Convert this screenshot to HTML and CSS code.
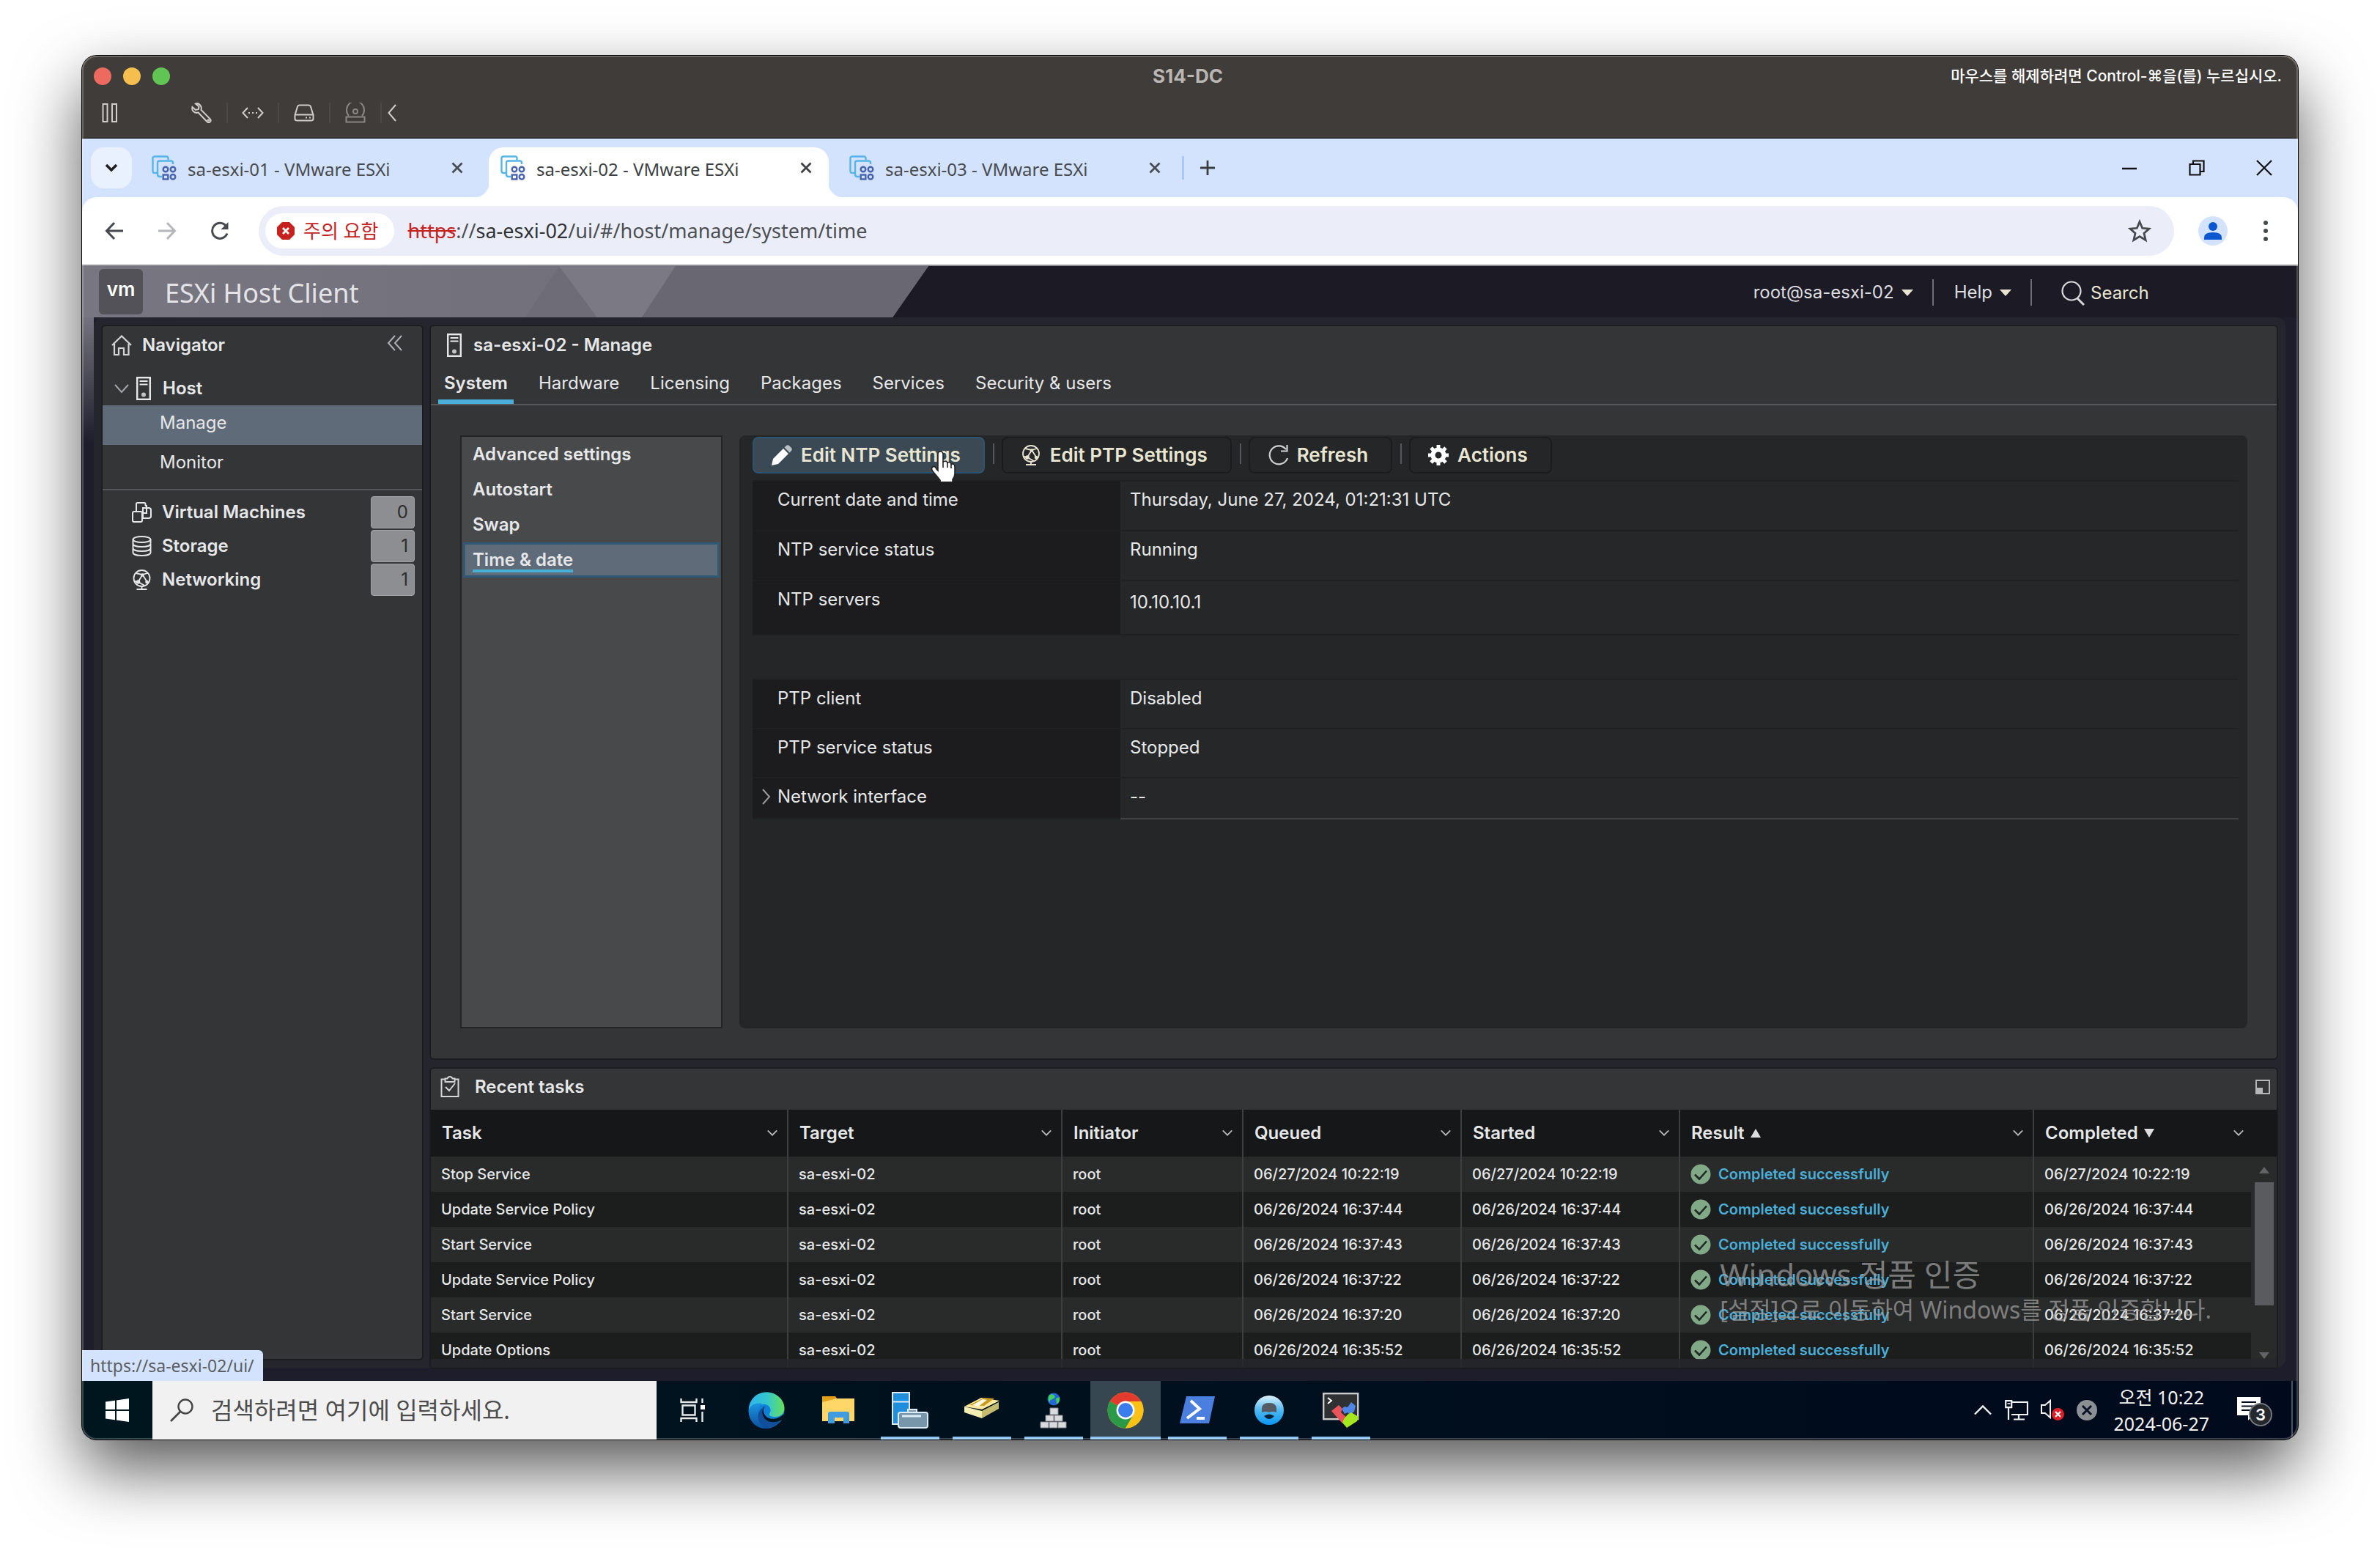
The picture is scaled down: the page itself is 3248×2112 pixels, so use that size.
FILE: index.html
```html
<!DOCTYPE html>
<html lang="ko">
<head>
<meta charset="utf-8">
<meta name="viewport" content="width=device-width, initial-scale=1">
<title>S14-DC</title>
<link rel="stylesheet" href="styles.css">
</head>
<body>
<svg class="sprite" aria-hidden="true">
  <symbol id="i-esxi" viewBox="0 0 34 34"><g fill="none" stroke="#56b4e6" stroke-width="2.4"><path d="M7 24H4Q1.500 24 1.500 21V4Q1.500 1.500 4 1.500H20Q22.500 1.500 22.500 4V6"/><path d="M14 29H11Q8 29 8 26V10Q8 7.500 11 7.500H26Q29 7.500 29 10V12"/></g><g fill="none" stroke="#4763ad" stroke-width="2.400"><circle cx="19" cy="19" r="3.300"/><circle cx="29" cy="19" r="3.300"/><rect x="15.700" y="26.500" width="6.600" height="6"/><circle cx="29" cy="29.300" r="3.300"/></g></symbol>
  <symbol id="i-x" viewBox="0 0 16 16"><path d="M1.500 1.500l13 13M14.500 1.500l-13 13" fill="none" stroke="currentColor" stroke-width="2.800"/></symbol>
  <symbol id="i-down" viewBox="0 0 18 12"><path d="M2 2l7 7 7-7" fill="none" stroke="currentColor" stroke-width="2"/></symbol>
  <symbol id="i-host" viewBox="0 0 20 32"><rect x="1.200" y="1.200" width="17.600" height="29.600" fill="none" stroke="currentColor" stroke-width="2.400"/><path d="M4.500 6h11M4.500 10.500h11" stroke="currentColor" stroke-width="2.200"/><circle cx="10" cy="24.500" r="3" fill="currentColor" opacity=".8"/></symbol>
  <symbol id="i-globe" viewBox="0 0 26 28"><g fill="none" stroke="currentColor" stroke-width="1.800"><circle cx="13" cy="12" r="11"/><path d="M6 27h14M13 23v4M5 5l9 2 7 11M21 5l-7 2-6 10-5-1M8 17l9 5"/></g><circle cx="14" cy="7.500" r="2.300" fill="currentColor"/><circle cx="8" cy="17" r="2.800" fill="currentColor"/><circle cx="20" cy="17" r="2.300" fill="currentColor"/></symbol>
  <symbol id="i-ok" viewBox="0 0 28 28"><circle cx="14" cy="14" r="13.500" fill="#82a987"/><path d="M6 14.500l6 6 10-11" fill="none" stroke="#1f2a22" stroke-width="2.600"/></symbol>
  <symbol id="i-lens" viewBox="0 0 32 32"><circle cx="21" cy="11" r="9.500" fill="none" stroke="currentColor" stroke-width="2.400"/><path d="M14 18L1 31" stroke="currentColor" stroke-width="2.600"/></symbol>
</svg>

<main class="window">
  <header class="titlebar">
    <div class="title-row">
      <div class="lights"><button class="light red" aria-label="닫기"></button><button class="light yellow" aria-label="최소화"></button><button class="light green" aria-label="확대"></button></div>
      <h1 class="vm-name">S14-DC</h1>
      <p class="hint">마우스를 해제하려면 Control-⌘을(를) 누르십시오.</p>
    </div>
    <div class="vm-tools">
      <button class="vm-tool pause" aria-label="일시 정지"><svg width="22" height="26" viewBox="0 0 22 26"><path d="M1.500 1h6v24h-6zM14 1h6v24h-6z"/></svg></button>
      <button class="vm-tool split" aria-label="설정"><svg width="28" height="28" viewBox="0 0 28 28"><path d="M6 1.500C10 0 15 4 13.500 10L26 22.500Q27.500 25 25.500 26.500T21.500 26L9.500 13.500C5 15 0 11 1.500 6L6 10l4-1 .5-3.500z"/><circle cx="23.500" cy="24" r=".8"/></svg></button>
      <button class="vm-tool split" aria-label="네트워크"><svg width="30" height="16" viewBox="0 0 30 16"><path d="M8 1L1.500 8 8 15M22 1l6.500 7L22 15M9 8h2M14 8h2M19 8h2"/></svg></button>
      <button class="vm-tool split" aria-label="디스크"><svg width="28" height="24" viewBox="0 0 28 24"><path d="M1.500 15L5 3.500Q5.600 1.500 8 1.500h12q2.400 0 3 2L26.500 15v5q0 2.500-3 2.500h-19q-3 0-3-2.500zM1.500 14.500h25M16 18.500h2M21 18.500h2"/></svg></button>
      <button class="vm-tool split dim" aria-label="CD/DVD"><svg width="28" height="28" viewBox="0 0 28 28"><path d="M5 18A12 12 0 1 1 23 18M1.500 19.500h25v7h-25z"/><circle cx="14" cy="12" r="3"/></svg></button>
      <button class="vm-tool narrow" aria-label="접기"><svg width="12" height="24" viewBox="0 0 12 24"><path d="M11 1L1.500 12 11 23"/></svg></button>
    </div>
  </header>

  <section class="browser">
    <div class="tabstrip">
      <button class="tab-search" aria-label="탭 검색"><svg width="18" height="12"><path d="M2 2l7 7 7-7" fill="none" stroke="#1f1f1f" stroke-width="3.600"/></svg></button>
      <div class="tabs">
        <div class="tab"><svg class="favicon"><use href="#i-esxi"/></svg><a href="#t1">sa-esxi-01 - VMware ESXi</a><button aria-label="탭 닫기"><svg width="16" height="16"><use href="#i-x"/></svg></button></div>
        <div class="tab active"><svg class="favicon"><use href="#i-esxi"/></svg><a href="#t2">sa-esxi-02 - VMware ESXi</a><button aria-label="탭 닫기"><svg width="16" height="16"><use href="#i-x"/></svg></button></div>
        <div class="tab"><svg class="favicon"><use href="#i-esxi"/></svg><a href="#t3">sa-esxi-03 - VMware ESXi</a><button aria-label="탭 닫기"><svg width="16" height="16"><use href="#i-x"/></svg></button></div>
      </div>
      <button class="new-tab" aria-label="새 탭"><svg width="22" height="22"><path d="M11 1v20M1 11h20" stroke="#3c4043" stroke-width="2.800"/></svg></button>
      <div class="win-controls">
        <button aria-label="최소화"><svg width="22" height="22"><path d="M1 12h20" stroke="#111" stroke-width="2.400"/></svg></button>
        <button aria-label="이전 크기로"><svg width="22" height="22" fill="none" stroke="#111" stroke-width="2.200"><path d="M1.500 6h14v14.500h-14zM6 6V1.500h14.500V16H16"/></svg></button>
        <button aria-label="닫기"><svg width="22" height="22"><path d="M1 1l20 20M21 1L1 21" stroke="#111" stroke-width="2.200"/></svg></button>
      </div>
    </div>
    <div class="toolbar">
      <button class="nav-btn" aria-label="뒤로"><svg width="26" height="26"><path d="M25 13H3M13 2L2.500 13 13 24" fill="none" stroke="#46494d" stroke-width="3"/></svg></button>
      <button class="nav-btn" aria-label="앞으로"><svg width="26" height="26"><path d="M1 13h22M13 2l10.500 11L13 24" fill="none" stroke="#b4b6b9" stroke-width="3"/></svg></button>
      <button class="nav-btn" aria-label="새로고침"><svg width="26" height="26"><path d="M23 16.500A10.500 10.500 0 1 1 21.500 6.500" fill="none" stroke="#46494d" stroke-width="3"/><path d="M24.500 1v10h-10z" fill="#46494d"/></svg></button>
      <div class="omnibox">
        <button class="chip"><svg width="24" height="24"><path d="M7 0h10l7 7v10l-7 7H7l-7-7V7z" fill="#c5221f"/><path d="M8 8l8 8M16 8l-8 8" stroke="#fff" stroke-width="2.800"/></svg><span>주의 요함</span></button>
        <div class="url" role="textbox" contenteditable="true" spellcheck="false" aria-label="주소"><s>https</s>://<span class="domain">sa-esxi-02</span>/ui/#/host/manage/system/time</div>
        <button class="star" aria-label="북마크"><svg width="32" height="32" viewBox="0 0 32 32"><path d="M16 3.500l3.700 8.800 9.300.8-7 6.200 2.100 9.200L16 23.600l-8.100 4.900L10 19.300l-7-6.200 9.300-.8z" fill="none" stroke="#46494d" stroke-width="2.800"/></svg></button>
      </div>
      <button class="profile" aria-label="프로필"><svg width="40" height="40"><circle cx="20" cy="20" r="20" fill="#d3e3fd"/><circle cx="20" cy="14" r="6" fill="#0b57d0"/><path d="M8 32v-3q0-7 12-7t12 7v3z" fill="#0b57d0"/></svg></button>
      <button class="more" aria-label="메뉴"><svg width="8" height="32" fill="#46494d"><circle cx="4" cy="5" r="3"/><circle cx="4" cy="16" r="3"/><circle cx="4" cy="27" r="3"/></svg></button>
    </div>

    <div class="app">
      <header class="app-header">
        <svg class="facets" width="1160" height="70" viewBox="0 0 1160 70" aria-hidden="true"><defs><linearGradient id="hg"><stop offset="0" stop-color="#787781"/><stop offset="1" stop-color="#6e6d77"/></linearGradient></defs><path d="M0 0H1155L1106 70H0z" fill="url(#hg)"/><path d="M651 0L605 70H703z" fill="#6e6d77"/><path d="M651 0H810L764 70H703z" fill="#7b7a84"/><path d="M810 0H1155L1106 70H764z" fill="#696872"/></svg>
        <span class="vm-logo">vm</span>
        <h2 class="product">ESXi Host Client</h2>
        <nav class="app-links">
          <button>root@sa-esxi-02<svg width="16" height="9"><path d="M0 0h16L8 9z" fill="#e8e6d2"/></svg></button>
          <button>Help<svg width="16" height="9"><path d="M0 0h16L8 9z" fill="#e8e6d2"/></svg></button>
        </nav>
        <label class="app-search"><svg width="32" height="34" viewBox="0 0 32 34" fill="none" stroke="#d8d8dc" stroke-width="2.200"><circle cx="14" cy="14" r="12.500"/><path d="M22 24l9 9" stroke-width="3"/></svg><input type="text" placeholder="Search" aria-label="Search"></label>
      </header>

      <div class="frame">
        <aside class="panel navigator">
          <div class="nav-head"><svg width="28" height="28" viewBox="0 0 28 28" fill="none" stroke="#d4d5d7" stroke-width="2.200"><path d="M1 14L14 1.500 27 14M4 12v15h6v-9h7v9h6.500V12"/></svg><h3>Navigator</h3><button aria-label="Collapse"><svg width="22" height="22" fill="none" stroke="#aeb0b3" stroke-width="2"><path d="M11 1L2 11l9 10M20 1l-9 10 9 10"/></svg></button></div>
          <a class="host" href="#host"><svg width="20" height="14" fill="none" stroke="#a3a5a8" stroke-width="2"><path d="M1 2l9 10 9-10"/></svg><svg width="20" height="32"><use href="#i-host"/></svg>Host</a>
          <ul class="host-sub"><li><a class="on" href="#manage">Manage</a></li><li><a href="#monitor">Monitor</a></li></ul>
          <ul class="inventory">
            <li><a href="#vms"><svg width="27" height="28" viewBox="0 0 27 28" fill="none" stroke="currentColor" stroke-width="2"><path d="M6 9V2.500Q6 1 7.500 1H17q1.500 0 1.500 1.500V5M14 8h9q3 0 3 3v8q0 3-3 3h-8V8zM6 9v4M18 5h2v10h-7"/><path d="M3 13h9q2 0 2 2v10q0 2-2 2H3q-2 0-2-2V15q0-2 2-2z"/></svg>Virtual Machines</a><span class="badge">0</span></li>
            <li><a href="#storage"><svg width="27" height="28" viewBox="0 0 27 28" fill="none" stroke="currentColor" stroke-width="2"><ellipse cx="13.500" cy="5" rx="12" ry="4"/><path d="M1.500 5v18c0 5.300 24 5.300 24 0V5M1.500 11c0 5.300 24 5.300 24 0M1.500 17c0 5.300 24 5.300 24 0"/></svg>Storage</a><span class="badge">1</span></li>
            <li><a href="#net"><svg width="27" height="28"><use href="#i-globe"/></svg>Networking</a><span class="badge">1</span></li>
          </ul>
        </aside>

        <div class="content">
          <section class="panel manage">
            <div class="panel-title"><svg width="20" height="32"><use href="#i-host"/></svg><h3>sa-esxi-02 - Manage</h3></div>
            <nav class="page-tabs"><a class="on" href="#system">System</a><a href="#hardware">Hardware</a><a href="#licensing">Licensing</a><a href="#packages">Packages</a><a href="#services">Services</a><a href="#security">Security &amp; users</a></nav>
            <div class="manage-body">
              <ul class="settings-menu"><li><a href="#adv">Advanced settings</a></li><li><a href="#auto">Autostart</a></li><li><a href="#swap">Swap</a></li><li class="on"><a href="#time">Time &amp; date</a></li></ul>
              <div class="details">
                <div class="actions">
                  <button class="hover"><svg width="28" height="28"><path d="M0 28l2-9L16 5l7 7L9 26z" fill="#fff"/><path d="M17.500 3.500L20 1q2-1.500 4 0l3 3q1.500 2 0 4l-2.500 2.500z" fill="#b9bec2"/></svg>Edit NTP Settings<svg class="cursor" width="34" height="46" viewBox="0 0 34 46"><path d="M10 27V5q0-4 3.500-4T17 5v10q4-2 6 1 4-1.500 5 2 5-1 5 4v9q0 5-3 8v6H13v-5L3 28q-3-4 0-6t5 3z" fill="#fff" stroke="#222" stroke-width="1.600"/><path d="M17 15v8M23 16v7M28 18v6" stroke="#222" stroke-width="1.600"/></svg></button>
                  <button><svg width="28" height="28"><use href="#i-globe"/></svg>Edit PTP Settings</button>
                  <button><svg width="28" height="30" fill="none" stroke="#cfd0d0" stroke-width="2.200"><path d="M27 19A12.500 12.500 0 1 1 25 7M26.500 1v8.500H18"/></svg>Refresh</button>
                  <button><svg width="28" height="28" viewBox="0 0 28 28"><circle cx="14" cy="14" r="7.500" fill="none" stroke="#fff" stroke-width="6"/><path d="M14 0v6M14 22v6M0 14h6M22 14h6M4 4l4.500 4.500M19.500 19.500L24 24M24 4l-4.500 4.500M8.500 19.500L4 24" stroke="#fff" stroke-width="5"/></svg>Actions</button>
                </div>
                <table class="props"><tbody>
                  <tr><th scope="row">Current date and time</th><td>Thursday, June 27, 2024, 01:21:31 UTC</td></tr>
                  <tr><th scope="row">NTP service status</th><td>Running</td></tr>
                  <tr class="tall"><th scope="row">NTP servers</th><td><div class="server-list">10.10.10.1</div></td></tr>
                </tbody></table>
                <table class="props last"><tbody>
                  <tr><th scope="row">PTP client</th><td>Disabled</td></tr>
                  <tr><th scope="row">PTP service status</th><td>Stopped</td></tr>
                  <tr class="short"><th scope="row"><svg class="twist" width="12" height="22" fill="none" stroke="#9a9b9d" stroke-width="2"><path d="M1 1l9 10-9 10"/></svg>Network interface</th><td>--</td></tr>
                </tbody></table>
              </div>
            </div>
          </section>

          <section class="panel tasks">
            <div class="tasks-head"><svg width="26" height="30" viewBox="0 0 26 30" fill="none" stroke="#d4d5d7" stroke-width="2"><path d="M6 4.500H1.500V28h23V4.500H20M6.500 3.500h3q1-2.500 3.500-2.500t3.500 2.500h3V8h-13zM7 15l5 5 8-10"/></svg><h3>Recent tasks</h3><button aria-label="Minimize"><svg width="20" height="20"><rect x="1" y="1" width="18" height="18" fill="none" stroke="#b5b6b8" stroke-width="2"/><path d="M2 11h8v7H2z" fill="#b5b6b8"/></svg></button></div>
            <div class="grid">
              <table class="task-table">
                <colgroup><col class="c-task"><col class="c-target"><col class="c-init"><col class="c-date"><col class="c-date"><col class="c-result"><col></colgroup>
                <thead><tr>
                  <th><div>Task<svg class="menu"><use href="#i-down"/></svg></div></th>
                  <th><div>Target<svg class="menu"><use href="#i-down"/></svg></div></th>
                  <th><div>Initiator<svg class="menu"><use href="#i-down"/></svg></div></th>
                  <th><div>Queued<svg class="menu"><use href="#i-down"/></svg></div></th>
                  <th><div>Started<svg class="menu"><use href="#i-down"/></svg></div></th>
                  <th><div>Result<svg class="sort" width="14" height="12"><path d="M7 0l7 12H0z" fill="#ddd"/></svg><svg class="menu"><use href="#i-down"/></svg></div></th>
                  <th><div>Completed<svg class="sort" width="14" height="12"><path d="M0 0h14L7 12z" fill="#ddd"/></svg><svg class="menu"><use href="#i-down"/></svg></div></th>
                </tr></thead>
                <tbody>
                  <tr><td>Stop Service</td><td>sa-esxi-02</td><td>root</td><td>06/27/2024 10:22:19</td><td>06/27/2024 10:22:19</td><td><span class="ok"><svg><use href="#i-ok"/></svg>Completed successfully</span></td><td>06/27/2024 10:22:19</td></tr>
                  <tr><td>Update Service Policy</td><td>sa-esxi-02</td><td>root</td><td>06/26/2024 16:37:44</td><td>06/26/2024 16:37:44</td><td><span class="ok"><svg><use href="#i-ok"/></svg>Completed successfully</span></td><td>06/26/2024 16:37:44</td></tr>
                  <tr><td>Start Service</td><td>sa-esxi-02</td><td>root</td><td>06/26/2024 16:37:43</td><td>06/26/2024 16:37:43</td><td><span class="ok"><svg><use href="#i-ok"/></svg>Completed successfully</span></td><td>06/26/2024 16:37:43</td></tr>
                  <tr><td>Update Service Policy</td><td>sa-esxi-02</td><td>root</td><td>06/26/2024 16:37:22</td><td>06/26/2024 16:37:22</td><td><span class="ok"><svg><use href="#i-ok"/></svg>Completed successfully</span></td><td>06/26/2024 16:37:22</td></tr>
                  <tr><td>Start Service</td><td>sa-esxi-02</td><td>root</td><td>06/26/2024 16:37:20</td><td>06/26/2024 16:37:20</td><td><span class="ok"><svg><use href="#i-ok"/></svg>Completed successfully</span></td><td>06/26/2024 16:37:20</td></tr>
                  <tr><td>Update Options</td><td>sa-esxi-02</td><td>root</td><td>06/26/2024 16:35:52</td><td>06/26/2024 16:35:52</td><td><span class="ok"><svg><use href="#i-ok"/></svg>Completed successfully</span></td><td>06/26/2024 16:35:52</td></tr>
                </tbody>
              </table>
              <div class="scrollbar" aria-hidden="true"><svg width="14" height="9"><path d="M7 0l7 9H0z" fill="#626365"/></svg><span class="thumb"></span><svg width="14" height="9"><path d="M0 0h14L7 9z" fill="#626365"/></svg></div>
            </div>
          </section>
        </div>
      </div>
      <div class="link-status">https://sa-esxi-02/ui/</div>
      <div class="watermark"><p class="wm-title">Windows 정품 인증</p><p class="wm-text">[설정]으로 이동하여 Windows를 정품 인증합니다.</p></div>
    </div>
  </section>

  <footer class="taskbar">
    <button class="start" aria-label="시작"><svg width="32" height="32"><path d="M0 4.500l13-1.800V15H0zM15 2.400L32 0v15H15zM0 17h13v12.300L0 27.500zM15 17h17v15l-17-2.400z" fill="#fff"/></svg></button>
    <label class="search"><svg width="32" height="32"><use href="#i-lens"/></svg><input type="text" placeholder="검색하려면 여기에 입력하세요." aria-label="검색"></label>
    <nav class="apps">
      <button aria-label="작업 보기"><svg width="34" height="32" fill="none" stroke="#e6e8e9" stroke-width="2.400"><path d="M1.500 0v5h21V0M1.500 32v-5h21v5M3.500 9.500h17v13h-17zM30.500 0v6M30.500 18v14"/><path d="M28 9h6v6h-6z" fill="#fff" stroke="none"/></svg></button>
      <button aria-label="Edge"><svg width="50" height="50" viewBox="0 0 50 50"><defs><linearGradient id="e1"><stop offset="0" stop-color="#2fb5ea"/><stop offset=".5" stop-color="#33c6cf"/><stop offset="1" stop-color="#67e05c"/></linearGradient><linearGradient id="e2" x2="0" y2="1"><stop offset="0" stop-color="#1b96e0"/><stop offset="1" stop-color="#0c4f9e"/></linearGradient></defs><circle cx="25" cy="25" r="24.500" fill="#0f7fd7"/><path d="M1 22C3 8 13 .5 25 .5 39 .5 49.500 11 49.500 22c0 8-6 12-12 12-7 0-10-2-8-5 3-5 0-12-8-12C12 17 4 21 1 28z" fill="url(#e1)"/><path d="M1 24c3-7 11-9.500 18-8-5 4-7 10-5 18s9 14 17 15C14 54-1 40 1 24z" fill="url(#e2)"/><path d="M22 20c-4 5-4 12 1 17s14 5 22 1C38 50 25 52 18 45s-6-20 4-25z" fill="#114f9c"/><path d="M23 19c-3 4-3 11 2 15s15 5 25-5v10l-4-1c-9 5-18 4-23-1s-5-13 0-18z" fill="#00151f"/></svg></button>
      <button aria-label="파일 탐색기"><svg width="44" height="38" viewBox="0 0 44 38"><path d="M0 0h18l3 4v6H0z" fill="#e3a21a"/><path d="M0 8l20-5h24v31H0z" fill="#ffd667"/><path d="M8 37V24q0-3 3-3h23q3 0 3 3v13h-8v-8H17v8z" fill="#3f9ce0"/></svg></button>
      <button class="open" aria-label="서버 관리자"><svg width="50" height="50" viewBox="0 0 50 50" stroke="#dcebf5" stroke-width="2"><path d="M1 1h23v43H1z" fill="#1f8fdd"/><path d="M1 13.500h23"/><path d="M22 28v-4h12v4" fill="#7b99ad"/><rect x="9" y="28" width="40" height="21" rx="3" fill="#7796aa"/><path d="M14 33h26" stroke-width="3"/></svg></button>
      <button class="open" aria-label="DNS"><svg width="50" height="50" viewBox="0 0 50 50"><path d="M1 20L24 8l25 4-24 12z" fill="#fbe9a0"/><path d="M8 18L28 8l14 1-14 10z" fill="#c99a1c"/><path d="M12 18L26 10l6 1-12 9z" fill="#fffbe2"/><path d="M1 20l24 6v10L1 28z" fill="#f3edb4"/><path d="M25 26l23-12v9L25 36z" fill="#c3bb6e"/></svg></button>
      <button class="open" aria-label="네트워크"><svg width="38" height="50" viewBox="0 0 38 50"><circle cx="19" cy="10" r="8.500" fill="#2566d8"/><path d="M13 4q5-2 7 1t-3 5-3 5q-4-4-1-11zM22 9l5-2q1 7-4 10z" fill="#3fd05a"/><g fill="#d9dadd" stroke="#85878d"><path d="M14 22h11v9H14zM8 32h11v8H8zM20 32h11v8H20zM1 41h11v8H1zM13 41h11v8H13zM25 41h11v8H25z"/></g></svg></button>
      <button class="open active" aria-label="Chrome"><svg width="50" height="50" viewBox="0 0 50 50"><circle cx="25" cy="25" r="24.500" fill="#fbc116"/><path d="M25 25L3.800 12.700A24.500 24.500 0 0 1 46.200 12.700z" fill="#e33b2e"/><path d="M3.800 12.700A24.500 24.500 0 0 0 25 49.500L36 31 25 25z" fill="#2b9a48"/><path d="M25 13h21.400A24.500 24.500 0 0 1 25 49.500L36 31z" fill="#fbc116"/><circle cx="25" cy="25" r="12.500" fill="#fff"/><circle cx="25" cy="25" r="10" fill="#3b7ded"/></svg></button>
      <button class="open" aria-label="PowerShell"><svg width="48" height="38" viewBox="0 0 48 38"><path d="M9 0h39l-8 37H0z" fill="#4a7fe0"/><path d="M15 6l12 11L10 30M23 30h11" fill="none" stroke="#fff" stroke-width="4"/></svg></button>
      <button class="open" aria-label="뷰어"><svg width="40" height="40" viewBox="0 0 40 40"><defs><linearGradient id="d1" x2="0" y2="1"><stop offset="0" stop-color="#dff1fb"/><stop offset=".5" stop-color="#4fb9f2"/><stop offset="1" stop-color="#0a95f2"/></linearGradient></defs><circle cx="20" cy="20" r="20" fill="url(#d1)"/><path d="M10 23v-5q0-8 10-8t10 8v5q-5-2-10 0-5-2-10 0z" fill="#555b62"/><path d="M13 28q7-5 14 0-7 8-14 0z" fill="#052338"/></svg></button>
      <button class="open" aria-label="MobaXterm"><svg width="50" height="48" viewBox="0 0 50 48"><rect x="1.200" y="1.200" width="47" height="35" fill="#2f3031" stroke="#c9cacc" stroke-width="2.400"/><path d="M7 7l5 4-5 4" fill="none" stroke="#fff" stroke-width="2"/><path d="M12 25l10-8 5 5-2 5 8 7-6 8z" fill="#e9535a"/><path d="M26 22l4-3 4 1 5-7 6 5-2 8-6 4-3-3-4 2z" fill="#4e86e8"/><path d="M29 36l5-6 5-3 10 6-2 6-14 9-6-7z" fill="#a6e61f"/></svg></button>
    </nav>
    <div class="tray">
      <button aria-label="숨겨진 아이콘"><svg width="26" height="14"><path d="M2 12.500l11-11 11 11" fill="none" stroke="#f2f2f2" stroke-width="2.400"/></svg></button>
      <button aria-label="네트워크"><svg width="32" height="28" fill="none" stroke="#f2f2f2" stroke-width="2.200"><path d="M10 3h21v17H9M19 20v6M12 26.500h15M1.200 1.200h8v9h-8zM5 10v17"/><path d="M3.500 5h4" stroke-width="1.600"/></svg></button>
      <button aria-label="볼륨"><svg width="32" height="30"><path d="M1 8h5l7-6v23l-7-6H1z" fill="none" stroke="#f2f2f2" stroke-width="2"/><circle cx="23.500" cy="20.500" r="8.500" fill="#de1f2b"/><path d="M20 17l7 7M27 17l-7 7" stroke="#fff" stroke-width="2.200"/></svg></button>
      <button aria-label="상태"><svg width="28" height="28"><circle cx="14" cy="14" r="14" fill="#8c9094"/><path d="M8 8l12 12M20 8L8 20" stroke="#0b1422" stroke-width="3"/></svg></button>
      <time class="clock" datetime="2024-06-27T10:22"><span>오전 10:22</span><span>2024-06-27</span></time>
      <button class="notify" aria-label="알림 3개"><svg width="34" height="36"><path d="M0 0h32v25H21l-6 7v-7H0z" fill="#fff"/><path d="M6 7h20M6 12.500h20M6 18h14" stroke="#00081a" stroke-width="2"/></svg><span class="count">3</span></button>
    </div>
  </footer>
</main>
</body>
</html>
```
FILE: styles.css
```css
:root {
  --ui: Inter, "Noto Sans CJK KR", sans-serif;
  --win: "Noto Sans", "Noto Sans CJK KR", sans-serif;
  --line: #55575a;
  --blue: #49afd9;
}
* { box-sizing: border-box; }
body { margin: 0; padding: 76px 112px 148px; background: #fff; font: 24px/28px var(--ui); color: #e6e7e8; }
h1, h2, h3, p, ul { margin: 0; padding: 0; font-weight: inherit; font-size: inherit; }
ul { list-style: none; }
a { color: inherit; text-decoration: none; }
button, input { margin: 0; padding: 0; border: 0; background: none; font: inherit; color: inherit; outline: 0; }
svg { display: block; flex: none; }
.sprite { position: absolute; width: 0; height: 0; }

/* VM window */
.window { position: relative; display: flex; flex-direction: column; min-height: calc(100vh - 224px); border-radius: 20px; overflow: hidden; background: #403c39; }
.window::after { content: ""; position: absolute; inset: 0; border-radius: 20px; box-shadow: inset 0 0 0 2px rgba(255, 255, 255, .22); pointer-events: none; }
body::before { content: ""; position: absolute; top: 76px; left: 112px; right: 112px; bottom: 148px; min-height: calc(100vh - 224px); border-radius: 20px; box-shadow: 0 0 0 1px #000, 0 40px 90px rgba(0, 0, 0, .66); }

.titlebar { height: 112px; }
.title-row { display: grid; grid-template-columns: 1fr auto 1fr; align-items: center; height: 56px; padding: 0 22px 0 16px; }
.lights { display: flex; gap: 16px; }
.light { width: 24px; height: 24px; border-radius: 50%; }
.red { background: #ed6a5e; }
.yellow { background: #f5bf4f; }
.green { background: #61c554; }
.vm-name { font-size: 26px; font-weight: 700; color: #bab6b3; }
.hint { justify-self: end; font: 500 21px/28px var(--ui); color: #fff; white-space: nowrap; }
.vm-tools { display: flex; align-items: center; height: 44px; padding-left: 3px; }
.vm-tool { display: flex; align-items: center; justify-content: center; width: 70px; height: 28px; fill: none; stroke: #cfccca; stroke-width: 2; }
.pause { margin-right: 56px; }
.split { border-right: 2px solid #4c4845; }
.dim { stroke: #8a8683; }
.narrow { width: 28px; }

/* Browser */
.browser { flex: 1; display: flex; flex-direction: column; background: #d3e3fd; color: #474a4f; font-family: var(--win); }
.tabstrip { display: flex; align-items: flex-end; height: 81px; border-top: 1px solid #000; }
.tab-search { display: flex; align-items: center; justify-content: center; width: 56px; height: 56px; margin: 0 11px 12px 12px; border-radius: 18px; background: #e9f0fe; }
.tabs { display: flex; gap: 12px; }
.tab { position: relative; display: flex; align-items: center; gap: 15px; width: 464px; height: 68px; padding: 0 23px 12px 16px; }
.tab a { flex: 1; padding-top: 4px; white-space: nowrap; }
.favicon { width: 34px; height: 34px; }
.active.tab { background: #fff; border-radius: 20px 20px 0 0; color: #3c3f43; }
.active.tab::before, .active.tab::after { content: ""; position: absolute; bottom: 0; width: 20px; height: 20px; }
.active.tab::before { left: -20px; background: radial-gradient(circle at 0 0, transparent 20px, #fff 21px); }
.active.tab::after { right: -20px; background: radial-gradient(circle at 100% 0, transparent 20px, #fff 21px); }
.new-tab { position: relative; height: 56px; margin: 0 0 12px 6px; padding: 0 24px; }
.new-tab::before { content: ""; position: absolute; left: 0; top: 12px; width: 3px; height: 32px; background: #a8c7fa; }
.win-controls { display: flex; margin-left: auto; height: 68px; padding-bottom: 12px; }
.win-controls button { display: flex; align-items: center; justify-content: center; width: 92px; }
.toolbar { display: flex; align-items: center; height: 94px; padding: 0 40px 0 8px; background: #fff; border-radius: 20px 20px 0 0; border-bottom: 2px solid #8f8f95; }
.nav-btn { display: flex; justify-content: center; width: 72px; }
.omnibox { flex: 1; display: flex; align-items: center; gap: 18px; height: 68px; margin: 0 33px 0 17px; padding: 0 31px 0 9px; border-radius: 34px; background: #ebeef8; }
.chip { display: flex; align-items: center; gap: 12px; height: 48px; padding: 0 22px 0 16px; border-radius: 24px; background: #fff; color: #c5221f; font-size: 26px; line-height: 36px; }
.url { flex: 1; font-size: 27px; line-height: 36px; color: #4c4f54; outline: 0; white-space: nowrap; }
.url s { color: #c5221f; }
.domain { color: #303236; }
.more { margin-left: 48px; }

/* ESXi host client */
.app { position: relative; flex: 1; display: flex; flex-direction: column; padding-bottom: 18px; background: linear-gradient(#74737d 70px, #1d1d2c 240px) no-repeat 0 0 / 16px 100%, #1d1d2c; color: #e6e7e8; font-family: var(--ui); }
.app-header { position: relative; display: flex; align-items: center; height: 70px; padding-left: 23px; background: #1c1b25; }
.facets { position: absolute; left: 0; top: 0; }
.vm-logo { position: relative; width: 60px; height: 62px; border-radius: 6px; background: #525258; color: #fff; font: 600 26px/56px var(--ui); text-align: center; }
.product { position: relative; margin-left: 30px; padding-top: 4px; font: 36px/48px var(--win); color: #e4e4e8; }
.app-links { display: flex; align-items: center; margin-left: auto; padding-top: 2px; }
.app-links button { display: flex; align-items: center; gap: 10px; height: 36px; padding: 0 26px 0 28px; border-right: 2px solid #6e6e76; color: #dcdce0; }
.app-search { display: flex; align-items: center; gap: 8px; padding: 3px 0 0 40px; }
.app-search input { width: 283px; }
.app-search input::placeholder { color: #e8e6d2; opacity: 1; }
.frame { flex: 1; display: grid; grid-template-columns: 436px minmax(0, 1fr); gap: 12px; margin: 0 17px 0 16px; padding: 12px; border-radius: 12px; background: #25252d; }
.panel { background: #343537; border-radius: 4px; box-shadow: 0 0 0 2px #1c1c20; }
.content { display: flex; flex-direction: column; gap: 14px; }

.nav-head { display: flex; align-items: center; gap: 14px; height: 52px; padding: 0 26px 0 12px; font-weight: 600; }
.nav-head button { margin: 0 0 6px auto; }
.host { display: flex; align-items: center; gap: 10px; height: 46px; margin-top: 10px; padding-left: 16px; font-weight: 600; }
.host svg + svg { margin-right: 6px; }
.host-sub { padding-bottom: 6px; border-bottom: 2px solid var(--line); }
.host-sub a { display: block; height: 54px; padding-left: 78px; line-height: 48px; }
.host-sub .on { background: #5f6b78; }
.inventory { margin-top: 7px; }
.inventory li { display: flex; align-items: center; justify-content: space-between; height: 46px; padding: 0 10px 0 40px; }
.inventory a { display: flex; align-items: center; gap: 14px; font-weight: 600; }
.badge { width: 60px; height: 44px; padding-right: 8px; border: 1px solid #a2a3a6; border-radius: 4px; background: #8d8e91; color: #2c2d2f; line-height: 42px; text-align: right; }

.manage { flex: 1; display: flex; flex-direction: column; }
.panel-title { display: flex; align-items: center; gap: 16px; height: 52px; padding-left: 22px; font-weight: 600; }
.page-tabs { display: flex; gap: 26px; height: 56px; padding-left: 10px; border-bottom: 2px solid var(--line); }
.page-tabs a { padding: 0 8px; line-height: 52px; }
.page-tabs .on { font-weight: 600; box-shadow: inset 0 -6px var(--blue); }
.manage-body { flex: 1; display: flex; gap: 23px; padding: 41px 40px; }
.settings-menu { width: 358px; border: 2px solid #232426; background: #48494b; font-weight: 600; }
.settings-menu li { height: 48px; padding-left: 15px; line-height: 48px; }
.settings-menu .on { margin: 0 2px; padding-left: 10px; border: 3px solid #2f5a76; background: #5f6b78; line-height: 42px; }
.settings-menu .on a { display: inline-block; height: 38px; border-bottom: 4px solid var(--blue); }
.details { flex: 1; padding: 0 12px 0 18px; border-radius: 8px; background: #252627; }
.actions { display: flex; gap: 11px; padding: 2px 0 9px; }
.actions button { position: relative; display: flex; align-items: center; gap: 12px; height: 50px; padding: 0 31px 0 24px; border: 2px solid #1b1c1d; border-radius: 8px; color: #e8e6d2; font-size: 26px; font-weight: 600; }
.actions .hover { background: #3a4953; border-color: #2d5571; }
.actions button + button { margin-left: 12px; }
.actions button + button::before { content: ""; position: absolute; left: -14px; top: 7px; width: 2px; height: 28px; background: #55575a; }
.actions .cursor { position: absolute; left: 241px; top: 17px; }
.props { width: 100%; border-collapse: collapse; table-layout: fixed; }
.props + .props { margin-top: 59px; }
.props tr { height: 68px; border-top: 2px solid #1f2022; border-bottom: 2px solid #1f2022; }
.props .tall { height: 74px; }
.last tr { height: 67px; }
.props .short { height: 56px; }
.props th { position: relative; width: 502px; padding: 11px 0 0 34px; background: #1c1c1e; font-weight: 400; text-align: left; vertical-align: top; }
.props td { padding: 11px 13px 0; background: #262729; vertical-align: top; }
.last .short td { border-bottom: 2px solid #414244; }
.server-list { padding-top: 4px; }
.twist { position: absolute; left: 13px; top: 14px; }

.tasks { position: relative; margin-bottom: -12px; }
.tasks::after { content: ""; position: absolute; left: 0; right: 0; bottom: 0; height: 12px; background: rgba(38, 38, 46, .85); }
.tasks-head { display: flex; align-items: center; gap: 21px; height: 56px; padding: 0 9px 6px 13px; font-weight: 600; }
.tasks-head button { margin-left: auto; }
.grid { position: relative; }
.task-table { width: 100%; border-collapse: collapse; table-layout: fixed; font-size: 20px; font-weight: 500; }
.c-task { width: 487px; }
.c-target { width: 374px; }
.c-init { width: 247px; }
.c-date { width: 298px; }
.c-result { width: 483px; }
.task-table th { position: relative; height: 64px; padding: 0 12px 0 15px; background: #161718; box-shadow: 0 4px #454648; font-size: 24px; font-weight: 600; text-align: left; }
.task-table th div { display: flex; align-items: center; }
.task-table th:last-child { padding-right: 44px; }
.task-table .menu { width: 16px; height: 12px; margin-left: auto; color: #b9babc; }
.task-table .sort { margin-left: 8px; }
.task-table td { height: 48px; padding: 0 0 0 14px; white-space: nowrap; }
.task-table td + td, .task-table th + th { border-left: 2px solid #3d3e40; }
.task-table tbody tr { background: #1c1e1d; }
.task-table tbody tr:nth-child(odd) { background: #292b2a; }
.ok { display: flex; align-items: center; gap: 10px; color: #4aaed9; font-weight: 600; }
.ok svg { width: 28px; height: 28px; }
.scrollbar { position: absolute; right: 0; top: 68px; bottom: 0; display: flex; flex-direction: column; align-items: center; width: 35px; padding: 10px 0 12px; background: #292b2a; }
.thumb { width: 26px; height: 168px; margin: 12px 0 auto; background: #5a5b5e; }

.link-status { position: absolute; left: 0; bottom: 0; height: 42px; padding: 0 12px 0 11px; border-radius: 0 6px 0 0; background: #d3e3fd; color: #5b5e63; font: 23px/42px var(--win); }
.watermark { position: absolute; right: 118px; bottom: 75px; color: rgba(165, 165, 165, .7); font-family: var(--win); font-weight: 400; pointer-events: none; }
.wm-title { font-size: 42px; line-height: 52px; }
.wm-text { font-size: 32px; line-height: 44px; }

/* Windows taskbar */
.taskbar { display: flex; height: 80px; background: linear-gradient(90deg, #00161f, #000a1c); font-family: var(--win); color: #f2f2f2; }
.start { display: flex; align-items: center; justify-content: center; width: 96px; }
.search { display: flex; align-items: center; gap: 24px; width: 688px; padding-left: 24px; background: #f1f1f1; color: #444; }
.search input { flex: 1; font-size: 32px; line-height: 40px; }
.search input::placeholder { color: #4d4d4d; opacity: 1; }
.apps { display: flex; }
.apps button { position: relative; display: flex; align-items: center; justify-content: center; width: 98px; }
.apps button + button { left: 3px; }
.apps .active { background: #364751; background-clip: content-box; padding: 0 1px; }
.apps .open::after { content: ""; position: absolute; left: 9px; right: 9px; bottom: 0; height: 4px; background: #8ac3f2; }
.apps .active::after { left: 1px; right: 1px; }
.tray { display: flex; align-items: center; gap: 17px; margin-left: auto; margin-right: 7px; padding-right: 24px; border-right: 2px solid #4a5560; }
.clock { display: flex; flex-direction: column; align-items: center; font-size: 25px; line-height: 36px; margin: 0 21px 0 5px; }
.notify { position: relative; width: 50px; }
.count { position: absolute; left: 16px; top: 8px; width: 32px; height: 32px; border: 2px solid #75797f; border-radius: 50%; background: #25282d; color: #fff; font: 600 22px/28px var(--ui); text-align: center; }
```
